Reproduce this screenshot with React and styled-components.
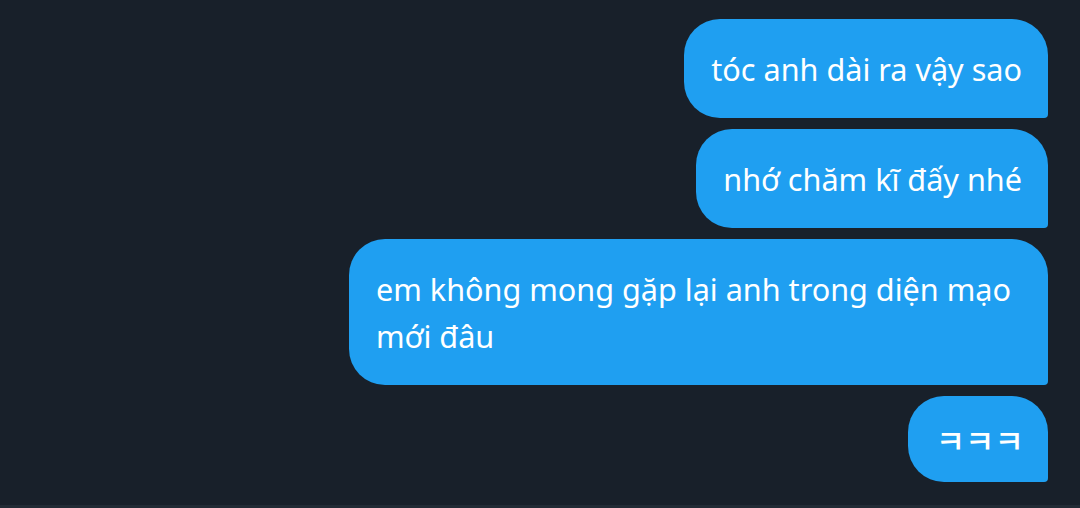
import React from 'react'
import styled, { createGlobalStyle } from 'styled-components'

const GlobalStyle = createGlobalStyle`
    html, body {
        margin: 0;
        padding: 0;
        background: #18202a;
    }
    body {
        font-family: "Noto Sans", "Noto Sans CJK KR", sans-serif;
    }
`;

const messages = [
    'tóc anh dài ra vậy sao',
    'nhớ chăm kĩ đấy nhé',
    'em không mong gặp lại anh trong diện mạo mới đâu',
];

const App = () => {
    return (
        <>
            <GlobalStyle />
            <Thread>
                {messages.map((text) => (
                    <Bubble key={text}>{text}</Bubble>
                ))}
                <Bubble $short>ㅋㅋㅋ</Bubble>
            </Thread>
            <BottomEdge />
        </>
    )
}

export default App;

const Thread = styled.div`
    height: 505px;
    box-sizing: border-box;
    padding: 19px 32px 0 0;
    display: flex;
    flex-direction: column;
    align-items: flex-end;
    gap: 11px;
`;

const Bubble = styled.div`
    box-sizing: border-box;
    max-width: 699px;
    padding: ${(p) => (p.$short ? '0 24px 0 28px' : '27px 26px 25px 27px')};
    height: ${(p) => (p.$short ? '86px' : 'auto')};
    display: flex;
    align-items: center;
    background: #1f9ff1;
    color: #ffffff;
    font-size: ${(p) => (p.$short ? '32px' : '30.6px')};
    line-height: 47px;
    border-radius: 36px 36px 4px 36px;
    ${(p) => p.$short && 'font-family: "Noto Sans CJK KR", sans-serif; font-weight: 500;'}
`;

const BottomEdge = styled.div`
    height: 3px;
    background: #222b35;
`;
